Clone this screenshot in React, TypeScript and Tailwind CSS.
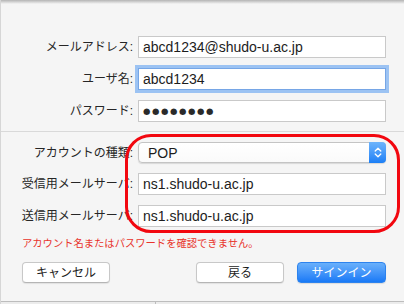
import React from "react";

const font = { fontFamily: '"Liberation Sans", "Noto Sans CJK JP", sans-serif' };

function Label({ children }: { children: React.ReactNode }) {
  return (
    <div className="text-right whitespace-nowrap text-[12px] leading-[16px] text-[#262626] flex justify-end overflow-visible">
      <span className="whitespace-nowrap">{children}</span>
    </div>
  );
}

function Field({ value, focused }: { value: React.ReactNode; focused?: boolean }) {
  return (
    <div
      className={
        "h-[22px] bg-white border flex items-center pl-[4px] text-[14px] leading-[16px] text-[#1c1c1c] " +
        (focused
          ? "border-[#76a6e6] shadow-[0_0_0_3px_#9cc3f3]"
          : "border-[#c9c9c9]")
      }
    >
      {value}
    </div>
  );
}

export default function App() {
  return (
    <div
      className="relative w-[404px] h-[304px] overflow-hidden bg-[#f5f5f5] flex flex-col border-l border-[#d6d6d6]"
      style={font}
    >
      <div className="h-[4px] bg-gradient-to-b from-[#b4b4b4] to-[#f5f5f5]" />

      <div className="pt-[32px] grid grid-cols-[132px_248px] gap-x-[5px] gap-y-[10px] items-center">
        <Label>メールアドレス:</Label>
        <Field value="abcd1234@shudo-u.ac.jp" />
        <Label>ユーザ名:</Label>
        <Field value="abcd1234" focused />
        <Label>パスワード:</Label>
        <Field
          value={
            <span className="text-[8.5px] tracking-[1.6px] text-[#2a2a2a]" style={{ fontFamily: '"DejaVu Sans", sans-serif' }}>
              ●●●●●●●●
            </span>
          }
        />
      </div>

      <div className="mt-[9px] h-px bg-[#d9d9d9]" />

      <div className="mt-[10px] grid grid-cols-[132px_248px] gap-x-[5px] gap-y-[10px] items-center">
        <Label>アカウントの種類:</Label>
        <div className="h-[21px] flex rounded-[4px] bg-gradient-to-b from-white to-[#fafafa] border border-[#c4c4c4] shadow-[0_1px_1px_rgba(0,0,0,0.12)]">
          <div className="flex-1 flex items-center pl-[9px] text-[14px] leading-[16px] text-[#1c1c1c]">POP</div>
          <div className="w-[17px] -my-px -mr-px rounded-r-[4px] bg-gradient-to-b from-[#6db4fb] to-[#1a7ff6] flex items-center justify-center">
            <svg width="8" height="13" viewBox="0 0 8 13" fill="none">
              <path d="M1.2 5 L4 2.2 L6.8 5" stroke="white" strokeWidth="1.3" strokeLinecap="round" strokeLinejoin="round" />
              <path d="M1.2 8 L4 10.8 L6.8 8" stroke="white" strokeWidth="1.3" strokeLinecap="round" strokeLinejoin="round" />
            </svg>
          </div>
        </div>
        <Label>受信用メールサーバ:</Label>
        <Field value="ns1.shudo-u.ac.jp" />
        <Label>送信用メールサーバ:</Label>
        <Field value="ns1.shudo-u.ac.jp" />
      </div>

      <div className="mt-[10px] pl-[21px] text-[10.3px] leading-[14px] text-[#e8332b] whitespace-nowrap">
        アカウント名またはパスワードを確認できません。
      </div>

      <div className="mt-[11px] flex pl-[21px] pr-[18px] text-[12px] leading-[16px]">
        <button className="w-[88px] h-[21px] bg-white border border-[#c8c8c8] border-b-[#b5b5b5] rounded-[4px] shadow-[0_1px_1px_rgba(0,0,0,0.08)] text-[#1c1c1c]">
          キャンセル
        </button>
        <div className="flex-1" />
        <button className="w-[88px] h-[21px] bg-white border border-[#c8c8c8] border-b-[#b5b5b5] rounded-[4px] shadow-[0_1px_1px_rgba(0,0,0,0.08)] text-[#1c1c1c]">
          戻る
        </button>
        <button className="ml-[13px] w-[89px] h-[21px] rounded-[4px] border border-[#2d83ee] bg-gradient-to-b from-[#69b0fb] to-[#1779f6] text-white shadow-[0_1px_1px_rgba(0,0,0,0.1)]">
          サインイン
        </button>
      </div>

      <div className="flex-1" />
      <div className="h-[3px] border-t border-[#bdbdbd] bg-[#ececec] flex">
        <div className="w-[155px] border-r border-[#bdbdbd]" />
      </div>

      <div className="pointer-events-none absolute left-[124px] top-[134px] w-[275px] h-[99px] rounded-[26px] border-[3px] border-[#f2070f]" />
    </div>
  );
}
